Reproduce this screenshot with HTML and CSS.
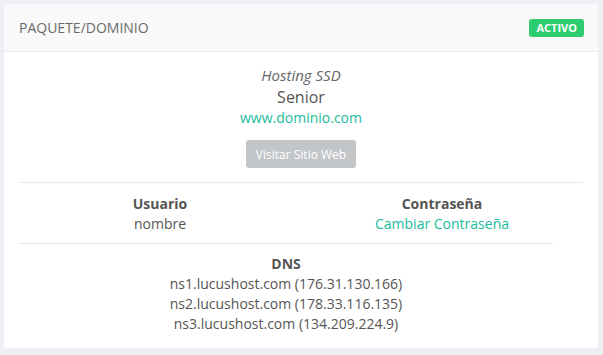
FILE: index.html
```html
<!DOCTYPE html>
<html lang="es">
<head>
<meta charset="utf-8">
<link rel="stylesheet" href="styles.css">
</head>
<body>
<div class="card">
  <div class="card-header">
    <span class="title">PAQUETE/DOMINIO</span>
    <span class="badge">ACTIVO</span>
  </div>
  <div class="card-body">
    <div class="plan">
      <div class="type">Hosting SSD</div>
      <div class="name">Senior</div>
      <a class="link" href="#">www.dominio.com</a>
      <div><button class="btn">Visitar Sitio Web</button></div>
    </div>
    <hr class="sep sep-full">
    <div class="creds">
      <div class="col">
        <div class="label">Usuario</div>
        <div>nombre</div>
      </div>
      <div class="col">
        <div class="label">Contraseña</div>
        <a class="link" href="#">Cambiar Contraseña</a>
      </div>
    </div>
    <div class="dns-wrap">
      <hr class="sep">
      <div class="dns">
        <div class="label">DNS</div>
        <div>ns1.lucushost.com (176.31.130.166)</div>
        <div>ns2.lucushost.com (178.33.116.135)</div>
        <div>ns3.lucushost.com (134.209.224.9)</div>
      </div>
    </div>
  </div>
</div>
</body>
</html>
```

FILE: styles.css
```css
html, body {
  margin: 0;
  padding: 0;
  background: #eff0f6;
}
body {
  padding: 4px 5px 7px 4px;
  font-family: "Open Sans", sans-serif;
  font-size: 14px;
  color: #555;
}
.card {
  background: #fff;
  border-radius: 4px;
  overflow: hidden;
  height: 344px;
  box-sizing: border-box;
}
.card-header {
  height: 48px;
  box-sizing: border-box;
  background: #f9f9fa;
  border-bottom: 1px solid #e9ecf1;
  display: flex;
  align-items: center;
  justify-content: space-between;
  padding: 0 14px 0 15px;
}
.title {
  font-size: 14px;
  color: #6a6a6a;
}
.badge {
  background: #2ecc71;
  color: #fff;
  font-weight: 700;
  font-size: 11px;
  line-height: 18px;
  height: 18px;
  padding: 0 7px;
  border-radius: 3px;
  margin-top: 1px;
}
.card-body {
  padding: 13px 15px 0 15px;
  text-align: center;
}
.plan {
  line-height: 20px;
}
.type {
  font-style: italic;
  font-size: 15px;
  color: #666;
  line-height: 21px;
}
.name {
  font-size: 16px;
  color: #555;
  line-height: 22px;
}
.link {
  color: #1abc9c;
  text-decoration: none;
  display: inline-block;
}
.btn {
  margin-top: 12px;
  width: 110px;
  height: 28px;
  border: 0;
  border-radius: 3px;
  background: #c3c6c9;
  color: #fff;
  font-family: "Open Sans", sans-serif;
  font-size: 12px;
  padding: 0;
}
.sep {
  border: 0;
  border-top: 1px solid #e9e9e9;
  margin: 0;
}
.sep-full {
  margin-top: 14px;
}
.creds {
  display: flex;
  padding: 11px 0 9px;
  line-height: 20px;
}
.col {
  flex: 1;
}
.label {
  font-weight: 700;
  color: #555;
}
.dns-wrap {
  width: 534px;
}
.dns {
  padding-top: 10px;
  line-height: 20px;
}
```
